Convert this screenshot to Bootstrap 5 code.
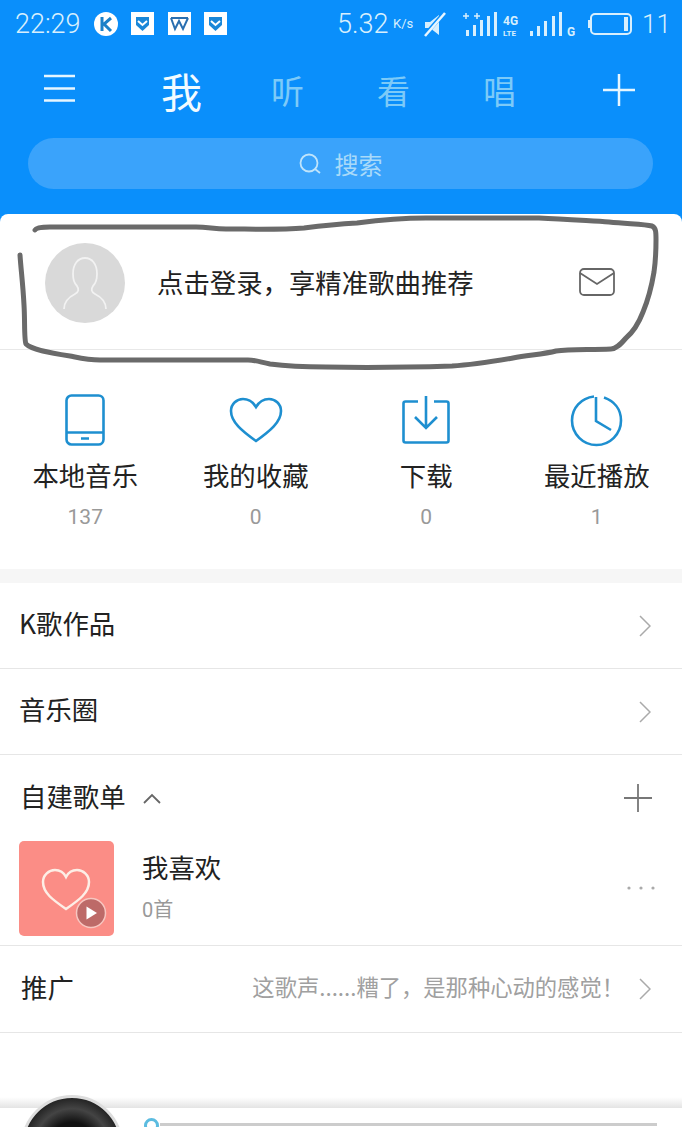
<!doctype html>
<html lang="zh"><head><meta charset="utf-8">
<link href="https://cdn.jsdelivr.net/npm/bootstrap@5.3.0/dist/css/bootstrap.min.css" rel="stylesheet">
<style>
html,body{margin:0;background:#fff}
body{width:682px;height:1127px;overflow:hidden;position:relative;font-family:"Noto Sans CJK SC","Liberation Sans",sans-serif;color:#222}
.num{font-family:Roboto,"Noto Sans CJK SC",sans-serif}
.hero{height:222px;background:#0a8ffb;color:#fff}
.stat-bar{height:48px;padding:0 0 0 15px;color:#d8effd}
.stat-time{font-size:27px;width:79px;font-weight:300}
.stat-speed{font-size:27px;font-weight:300;margin-left:108px;width:49px}
.stat-unit{font-size:13px;margin:0 12px 0 7px;width:19px;white-space:nowrap}
.stat-end{font-size:26px;font-weight:300;margin-left:10px;line-height:32px}
.tabs-row{height:82px;position:relative}
.tab-it{position:absolute;top:20px;line-height:44px;font-size:33px;color:#7ccaf8}
.tab-me{font-size:41px;color:#f2fbff;left:161px}
.search-box{height:51px;margin:8px 29px 0 28px;background:#3aa3fb;border-radius:26px;color:#a9daf9;font-size:24px;gap:14px}
.sheet{background:#fff;border-radius:8px 8px 0 0;margin-top:-8px;position:relative}
.profile-row{height:136px;border-bottom:1px solid #e8e8e8;padding:0 67px 0 45px}
.avatar-bg{width:80px;height:80px;border-radius:50%;background:#d9d9d9;margin-right:32px;flex:none;margin-top:2px}
.txt-26{font-size:26.4px;line-height:36px}
.lift-txt{padding-bottom:4px}
.lift-more{padding-bottom:6px}
.stats-row{height:233px;margin:0;border-bottom:14px solid #f6f6f6}
.stat-cell{padding:0;display:flex;flex-direction:column;align-items:center;width:25%}
.stat-ico{height:62px;margin-top:39px;display:flex;align-items:center}
.stat-lab{font-size:26.4px;line-height:36px;margin-top:6px;color:#222}
.stat-num{font-size:21px;color:#999;margin-top:10px;line-height:28px}
.menu-row{height:86px;border-bottom:1px solid #e6e6e6;padding:0 31px 0 19px}
.promo-row{height:87px;padding-left:21px}
.list-head{height:86px;padding:0 30px 0 20px}
.like-row{height:105px;border-bottom:1px solid #e6e6e6;padding:0 27px 10px 19px}
.thumb-box{width:95px;height:95px;border-radius:5px;background:#fb8d86;margin-right:28px;flex:none}
.like-info{padding-bottom:3px}
.like-count{font-size:20px;color:#999;margin-top:10px;line-height:28px}
.promo-txt{font-size:22.3px;color:#a0a0a0;margin-right:15px}
.player-clip{position:absolute;left:0;right:0;top:1090px;height:37px;overflow:hidden}
.fade-strip{height:18px;background:linear-gradient(#fff 40%,#e4e4e4)}
.disc{position:absolute;left:21px;top:5px;width:102px;height:102px;border-radius:50%;background:radial-gradient(circle at 50% 50%,#111 0 35%,#444 55%,#111 80%);border:3px solid #ddd}
.prog-bar{position:absolute;left:160px;top:33px;width:497px;height:3px;background:#ccc}
.prog-dot{position:absolute;left:144px;top:28px;width:15px;height:15px;border-radius:50%;border:3px solid #5cbce0;background:#fff}
.scribble{position:absolute;left:0;top:0;pointer-events:none}
</style></head><body>
<div class="hero">
 <div class="stat-bar d-flex align-items-center">
  <span class="stat-time num">22:29</span>
  <svg width="135" height="26" viewBox="0 0 135 26">
   <circle cx="12" cy="13" r="12" fill="#fff"/><path d="M8 6v14M17 7l-7 6 7 7" fill="none" stroke="#1a80c8" stroke-width="3"/>
   <g fill="#fff"><rect x="37" y="1" width="23" height="23"/><rect x="74" y="1" width="23" height="23"/><rect x="110" y="1" width="23" height="23"/></g>
   <path d="M42 6h13v8l-6.500 6-6.500-6z" fill="#1a87d8"/><path d="M44 10l4.500 4 4.500-4" fill="none" stroke="#fff" stroke-width="2"/>
   <path d="M115 6h13v8l-6.500 6-6.500-6z" fill="#1a87d8"/><path d="M117 10l4.500 4 4.500-4" fill="none" stroke="#fff" stroke-width="2"/>
   <path d="M77 7l4 11 4-8 4 8 5-11M77 7h17" fill="none" stroke="#2a6fb0" stroke-width="2"/>
  </svg>
  <span class="stat-speed num">5.32</span>
  <span class="stat-unit num">K/s</span>
  <svg width="208" height="28" viewBox="0 0 208 28" fill="#d8effd">
   <path d="M1 11h5l9-7v20l-9-7H1z" transform="translate(0 1)"/><path d="M0 26L21 2" stroke="#0a8ffb" stroke-width="4"/><path d="M1 26L21 3" stroke="#e8f6ff" stroke-width="2.500"/>
   <g transform="translate(39 0)"><path d="M0 6h6M3 3v6M11 6h6M14 3v6" stroke="#d8effd" stroke-width="1.500"/><rect x="3" y="20" width="3" height="6"/><rect x="10" y="15" width="3" height="11"/><rect x="17" y="10" width="3" height="16"/><rect x="24" y="6" width="3" height="20"/><rect x="31" y="2" width="3" height="24"/></g>
   <text x="79" y="15" font-size="12" font-weight="700" font-family="Roboto">4G</text><text x="79" y="26" font-size="8" font-weight="700" font-family="Roboto">LTE</text>
   <g transform="translate(106 0)"><rect x="0" y="21" width="3" height="5"/><rect x="7" y="16" width="3" height="10"/><rect x="14" y="11" width="3" height="15"/><rect x="22" y="6" width="3" height="20"/><rect x="29" y="2" width="3" height="24"/></g>
   <text x="143" y="26" font-size="12" font-weight="700" font-family="Roboto">G</text>
   <rect x="167" y="4" width="40" height="20" rx="4" fill="none" stroke="#d8effd" stroke-width="2"/><rect x="200" y="7" width="4" height="14"/><rect x="164" y="10" width="2" height="8"/>
  </svg>
  <span class="stat-end num">11</span>
 </div>
 <div class="tabs-row">
  <svg class="position-absolute" style="left:44px;top:26px" width="32" height="30" viewBox="0 0 32 30"><path d="M0 2h31M0 14.500h31M0 26.500h31" stroke="#e6f6ff" stroke-width="2.500"/></svg>
  <span class="tab-it tab-me">我</span>
  <span class="tab-it" style="left:271px">听</span>
  <span class="tab-it" style="left:377px">看</span>
  <span class="tab-it" style="left:483px">唱</span>
  <svg class="position-absolute" style="left:603px;top:26px" width="32" height="32" viewBox="0 0 32 32"><path d="M0 16h32M16 0v32" stroke="#e6f6ff" stroke-width="2.500"/></svg>
 </div>
 <div class="search-box d-flex align-items-center justify-content-center">
  <svg width="22" height="22" viewBox="0 0 22 22" fill="none" stroke="#bfe4fb" stroke-width="1.800"><circle cx="10" cy="10" r="8.500"/><path d="M16 16l5 4"/></svg>
  <span>搜索</span>
 </div>
</div>
<div class="sheet">
 <div class="profile-row d-flex align-items-center">
  <div class="avatar-bg d-flex align-items-center justify-content-center overflow-hidden">
   <svg width="46" height="54" viewBox="0 0 46 54" fill="none" stroke="#f2f2f2" stroke-width="1.800"><path d="M2 53c0-8 5-12 11-15 4-2 4-5 2-8-3-3-4-7-4-12C11 8 16 2 23 2s12 6 12 16c0 5-1 9-4 12-2 3-2 6 2 8 6 3 11 7 11 15"/></svg>
  </div>
  <span class="txt-26 flex-grow-1">点击登录，享精准歌曲推荐</span>
  <svg width="36" height="28" viewBox="0 0 36 28" fill="none" stroke="#666" stroke-width="1.800"><rect x="1" y="1" width="34" height="26" rx="4"/><path d="M1 5l17 11L35 5"/></svg>
 </div>
 <div class="row stats-row">
  <div class="stat-cell">
   <div class="stat-ico"><svg width="40" height="52" viewBox="0 0 40 52" fill="none" stroke="#1e8fd0" stroke-width="2.600"><rect x="1.500" y="1.500" width="37" height="49" rx="5"/><path d="M2 38.500h36"/><path d="M16 44.500h8" stroke-width="2.500"/></svg></div>
   <div class="stat-lab">本地音乐</div><div class="stat-num num">137</div>
  </div>
  <div class="stat-cell">
   <div class="stat-ico"><svg width="54" height="46" viewBox="0 0 54 46" fill="none" stroke="#1e8fd0" stroke-width="2.600"><path d="M27 44C13 34 2 25 2 14 2 6.500 8 2 14 2c6 0 10 3 13 8 3-5 7-8 13-8 6 0 12 4.500 12 12 0 11-11 20-25 30z"/></svg></div>
   <div class="stat-lab">我的收藏</div><div class="stat-num num">0</div>
  </div>
  <div class="stat-cell">
   <div class="stat-ico"><svg width="48" height="48" viewBox="0 0 48 48" fill="none" stroke="#1e8fd0" stroke-width="2.600"><path d="M16 5.500H3.500a2 2 0 0 0-2 2v37a2 2 0 0 0 2 2h41a2 2 0 0 0 2-2v-37a2 2 0 0 0-2-2H32"/><path d="M24 0v30M13 21l11 11 11-11"/></svg></div>
   <div class="stat-lab">下载</div><div class="stat-num num">0</div>
  </div>
  <div class="stat-cell">
   <div class="stat-ico"><svg width="53" height="53" viewBox="0 0 53 53" fill="none" stroke="#1e8fd0" stroke-width="2.600"><path d="M24 2.500C11 4 2 14 2 26.500 2 40 13 51 26.500 51S51 40 51 26.500C51 15 44 7 34 3.500"/><path d="M26 3v24l15 9"/></svg></div>
   <div class="stat-lab">最近播放</div><div class="stat-num num">1</div>
  </div>
 </div>
 <div class="menu-row d-flex align-items-center justify-content-between">
  <span class="txt-26 lift-more">K歌作品</span>
  <svg width="12" height="22" viewBox="0 0 12 22" fill="none" stroke="#aaa" stroke-width="1.500"><path d="M1 1l10 10L1 21"/></svg>
 </div>
 <div class="menu-row d-flex align-items-center justify-content-between">
  <span class="txt-26 lift-more">音乐圈</span>
  <svg width="12" height="22" viewBox="0 0 12 22" fill="none" stroke="#aaa" stroke-width="1.500"><path d="M1 1l10 10L1 21"/></svg>
 </div>
 <div class="list-head d-flex align-items-center">
  <span class="txt-26 lift-txt">自建歌单</span>
  <svg class="ms-3 flex-grow-0" width="20" height="12" viewBox="0 0 20 12" fill="none" stroke="#666" stroke-width="1.800"><path d="M2 11l8-8 8 8"/></svg>
  <svg class="ms-auto" width="28" height="28" viewBox="0 0 28 28"><path d="M0 14h28M14 0v28" stroke="#777" stroke-width="1.800"/></svg>
 </div>
 <div class="like-row d-flex align-items-center">
  <div class="thumb-box">
   <svg width="95" height="95" viewBox="0 0 95 95"><path d="M47 68C34 59 24 52 24 41c0-7 6-12 12-12 5 0 9 3 11 7 2-4 6-7 11-7 6 0 12 5 12 12 0 11-10 18-23 27z" fill="none" stroke="#fdeee6" stroke-width="2.500"/><circle cx="72" cy="72" r="14.500" fill="#bd6a68" stroke="#f7c6c0" stroke-width="1.500"/><path d="M67.500 65.500v13l10.500-6.500z" fill="#fff"/></svg>
  </div>
  <div class="flex-grow-1 like-info"><div class="txt-26">我喜欢</div><div class="like-count"><span class="num">0</span>首</div></div>
  <svg width="28" height="4" viewBox="0 0 28 4" fill="#aaa"><circle cx="2" cy="2" r="1.600"/><circle cx="14" cy="2" r="1.600"/><circle cx="26" cy="2" r="1.600"/></svg>
 </div>
 <div class="menu-row promo-row d-flex align-items-center">
  <span class="txt-26 lift-txt me-auto">推广</span>
  <span class="promo-txt lift-txt">这歌声......糟了，是那种心动的感觉！</span>
  <svg width="12" height="22" viewBox="0 0 12 22" fill="none" stroke="#aaa" stroke-width="1.500"><path d="M1 1l10 10L1 21"/></svg>
 </div>
</div>
<div class="player-clip">
 <div class="fade-strip"></div>
 <div class="disc"></div>
 <div class="prog-bar"></div>
 <div class="prog-dot"></div>
</div>
<svg class="scribble" width="682" height="400" viewBox="0 0 682 400" fill="none" stroke="#6a6a6a" stroke-width="5" stroke-linecap="round" stroke-linejoin="round"><path d="M35 230C36 228 40 227 50 227H196C208 227 214 229 226 229C250 229 280 230 304 228C320 226 340 224 357 223C380 220 400 218 426 218H539C565 219 590 221 609 222C630 224 645 224 652 226C656 228 656 232 656 240C656 255 655 265 654 272C651 290 648 300 643 312C638 325 632 333 626 338C620 345 616 349 611 349C590 350 570 349 556 351C545 354 530 355 513 358C490 362 470 365 452 366C420 367 370 368 326 367C300 367 285 366 270 364C260 362 255 360 248 360H100C88 360 80 358 70 356C50 353 32 350 26 344C24 340 25 320 24 305C23 285 21 270 20 255"/></svg>
</body></html>
